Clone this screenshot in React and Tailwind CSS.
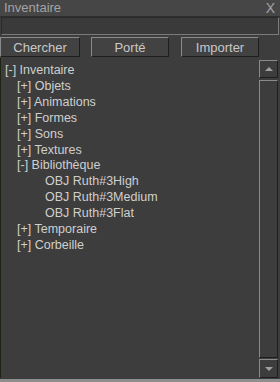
import React from 'react';

const tree = [
  { label: '[-] Inventaire', level: 0 },
  { label: '[+] Objets', level: 1 },
  { label: '[+] Animations', level: 1 },
  { label: '[+] Formes', level: 1 },
  { label: '[+] Sons', level: 1 },
  { label: '[+] Textures', level: 1 },
  { label: '[-] Bibliothèque', level: 1 },
  { label: 'OBJ Ruth#3High', level: 2 },
  { label: 'OBJ Ruth#3Medium', level: 2 },
  { label: 'OBJ Ruth#3Flat', level: 2 },
  { label: '[+] Temporaire', level: 1 },
  { label: '[+] Corbeille', level: 1 },
];

const indent = ['pl-[4px]', 'pl-[16px]', 'pl-[44px]'];

const App = () => {
  return (
    <div
      className="w-[280px] h-[382px] bg-[#3d3d3d] flex flex-col overflow-hidden text-[#cfcfcf]"
      style={{ fontFamily: '"Liberation Sans", Arial, sans-serif' }}
    >
      {/* Title bar */}
      <div className="h-[17px] bg-[#464646] border-b border-[#2e2e2e] flex items-center justify-between pl-[4px] pr-[5px] text-[13px] text-[#a3a3a3]">
        <span>Inventaire</span>
        <span className="text-[14px]">X</span>
      </div>

      {/* Search field */}
      <div className="h-[18px] bg-[#3a3a3a] border-t border-l border-[#2a2a2a] border-r border-b border-r-[#7a7a7a] border-b-[#7a7a7a] ml-[1px] mr-[1px]"></div>

      {/* Buttons */}
      <div className="flex mt-[2px] h-[20px]">
        <button className="w-[80px] h-full bg-[#424242] border-t border-l border-[#8a8a8a] border-r border-b border-r-[#1e1e1e] border-b-[#1e1e1e] text-[13px] text-[#c8c8c8] leading-none">
          Chercher
        </button>
        <div className="w-[11px]"></div>
        <button className="w-[78px] h-full bg-[#424242] border-t border-l border-[#8a8a8a] border-r border-b border-r-[#1e1e1e] border-b-[#1e1e1e] text-[13px] text-[#c8c8c8] leading-none">
          Porté
        </button>
        <div className="w-[12px]"></div>
        <button className="w-[78px] h-full bg-[#424242] border-t border-l border-[#8a8a8a] border-r border-b border-r-[#1e1e1e] border-b-[#1e1e1e] text-[13px] text-[#c8c8c8] leading-none">
          Importer
        </button>
      </div>

      {/* Tree panel */}
      <div className="flex-1 flex border-l border-[#1c2414] mt-[1px]">
        <div className="flex-1 pt-[5px] text-[12.5px] leading-[15.9px]">
          {tree.map((item) => (
            <div key={item.label} className={indent[item.level]}>
              {item.label}
            </div>
          ))}
        </div>

        {/* Scrollbar */}
        <div className="w-[19px] mr-[2px] pt-[2px] flex flex-col">
          <div className="h-[18px] bg-[#3d3d3d] border-t border-l border-[#8a8a8a] border-r border-b border-r-[#1e1e1e] border-b-[#1e1e1e] flex items-center justify-center">
            <div className="w-0 h-0 border-l-[4px] border-r-[4px] border-b-[4px] border-l-transparent border-r-transparent border-b-[#a0a0a0]"></div>
          </div>
          <div className="flex-1 mt-[2px] border-t border-l border-[#8a8a8a] border-r border-b border-r-[#1e1e1e] border-b-[#1e1e1e]"></div>
          <div className="h-[19px] mt-[1px] border-t border-l border-[#8a8a8a] border-r border-b border-r-[#1e1e1e] border-b-[#1e1e1e] flex items-center justify-center">
            <div className="w-0 h-0 border-l-[4px] border-r-[4px] border-t-[4px] border-l-transparent border-r-transparent border-t-[#a0a0a0]"></div>
          </div>
        </div>
      </div>

      {/* Bottom edge */}
      <div className="h-[3px] mt-[1px] bg-[#8e8e8e]"></div>
    </div>
  );
};

export default App;
